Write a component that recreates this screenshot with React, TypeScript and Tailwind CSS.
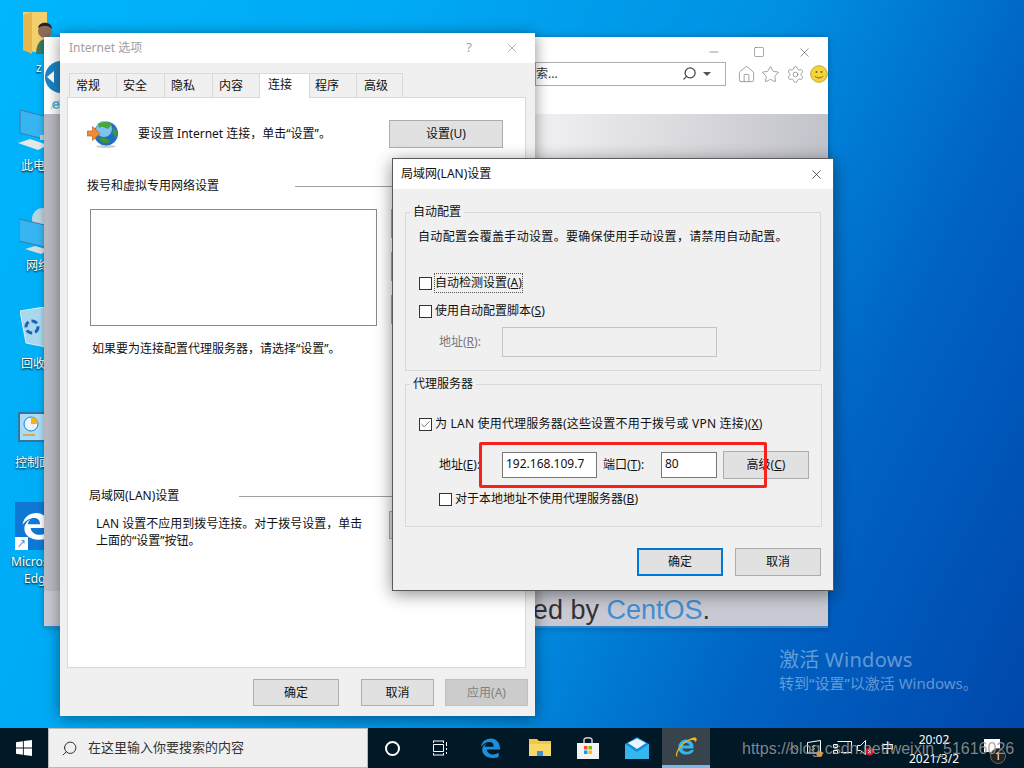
import { Home, Star, Settings, Search, X, Minus, Square, ChevronUp, Check } from "lucide-react";

const ui = "font-['Noto_Sans','Noto_Sans_CJK_SC',sans-serif]";

function Btn({ label, className = "" }: { label?: React.ReactNode; className?: string }) {
  return <div className={`flex items-center justify-center text-[12px] ${className}`}>{label}</div>;
}

const btn = "bg-[#e1e1e1] border border-[#adadad] text-[#111]";

function Box({ checked, dotted, children }: { checked?: boolean; dotted?: boolean; children: React.ReactNode }) {
  return (
    <div className="flex items-center gap-[3px] h-[16px]">
      <div className="w-[13px] h-[13px] border border-[#333] bg-white flex items-center justify-center">
        {checked && <Check size={11} strokeWidth={1.5} className="text-[#333]" />}
      </div>
      <span className={dotted ? "outline-1 outline-dotted outline-[#555]" : ""}>{children}</span>
    </div>
  );
}

function WinLogo({ size = 16, color = "#fff" }: { size?: number; color?: string }) {
  return (
    <svg width={size} height={size} viewBox="0 0 16 16" fill={color}>
      <path d="M0 2.2 6.9 1.2V7.6H0zM7.8 1.1 16 0V7.6H7.8zM0 8.4H6.9V14.8L0 13.8zM7.8 8.4H16V16L7.8 14.9z" />
    </svg>
  );
}

function EdgeE({ size = 24, color = "#1a8fdc" }: { size?: number; color?: string }) {
  return (
    <svg width={size} height={size} viewBox="0 0 24 24" fill="none">
      <path
        d="M2 11C3 4.5 8 1.5 13 1.5 19 1.5 23 6 23 13.5H8.5C9 17 12 19 15.5 19 18 19 20 18.2 21.5 17.3V21.5C19.5 22.6 17 23 14.5 23 8 23 3.5 19 3.5 14 3.5 11 5.5 8 8.5 6.5 7 8 6.5 9.2 6.2 10.5H16C16 7.5 14.5 5.5 11.5 5.5 8 5.5 4.5 7.5 2 11Z"
        fill={color}
      />
    </svg>
  );
}

function IeLogo({ size = 24 }: { size?: number }) {
  return (
    <svg width={size} height={size} viewBox="0 0 24 24" fill="none">
      <path d="M4.500 12.500A7.500 7.500 0 0 1 19.500 11.500V13.500H8.500C9 17 14 18 17 15H20C17.500 21.500 4.500 21.500 4.500 12.500ZM8.700 10.500H15.500C15 7 9.500 7 8.700 10.500Z" fill="#35b6f0" fillRule="evenodd" />
      <path d="M2.500 21.500C0 18 8 5 20 2.500 23 2 23.500 4.500 21.500 7.500 22 3.500 14 4 8 11 4.500 15 2.500 19 3.500 21.500Z" fill="#edb91b" />
    </svg>
  );
}

function Globe() {
  return (
    <svg width="32" height="28" viewBox="0 0 32 28">
      <ellipse cx="19" cy="26.500" rx="10" ry="1.500" fill="#ccc" />
      <circle cx="19" cy="13.500" r="12" fill="#1f6fc0" />
      <circle cx="17" cy="9" r="8" fill="#7cc4ef" />
      <path d="M11 4C14 1.500 21 1 25 4L21 9 15 6.500 12 8Z" fill="#46a83a" />
      <path d="M12 18C16 16.500 21 18.500 23 21.500 19 24.500 14 23 12 18ZM26 7 30.500 12 29 18 25.500 13Z" fill="#3c9a30" />
      <path d="M0 11H5.500V6.500L13 13.500 5.500 20.500V16H0Z" fill="#f08a38" stroke="#c9631a" strokeWidth=".7" />
    </svg>
  );
}

function PcIcon() {
  return (
    <svg width="30" height="46" viewBox="0 0 30 46">
      <path d="M2 0 30 7V30L2 23Z" fill="#36b5f2" stroke="#3d7da6" />
      <path d="M0 33 12 29 30 35 20 40Z" fill="#e3e8eb" />
      <path d="M22 25H30V30H22Z" fill="#c7ced2" />
    </svg>
  );
}

function Label({ children }: { children: React.ReactNode }) {
  return <div className="text-[12px] leading-[16px] text-white [text-shadow:0_1px_2px_#000]">{children}</div>;
}

function DesktopIcons() {
  return (
    <>
      <div className="absolute left-[23px] top-[12px] w-[32px] h-[40px]">
        <svg width="34" height="42" viewBox="0 0 34 42">
          <path d="M0 0H24V42L0 38Z" fill="#f3cf6d" />
          <path d="M0 3 9 0V42L0 38Z" fill="#e5b74c" />
          <circle cx="22" cy="19" r="7" fill="#8a6d58" />
          <path d="M15 16C16 9 29 9 29 17 25 13 20 13 15 16Z" fill="#222" />
          <path d="M13 42C13 32 18 27 22 27V42Z" fill="#3d7a5c" />
        </svg>
      </div>
      <div className="absolute left-[36px] top-[60px]"><Label>z</Label></div>

      <div className="absolute left-[18px] top-[110px]"><PcIcon /></div>
      <div className="absolute left-[21px] top-[158px]"><Label>此电脑</Label></div>

      <div className="absolute left-[19px] top-[208px]">
        <svg width="30" height="46" viewBox="0 0 30 46">
          <circle cx="24" cy="11" r="11" fill="#b7d3e0" />
          <path d="M0 11 30 18V40L0 33Z" fill="#36b5f2" stroke="#3d7da6" />
          <path d="M6 41 16 38 30 42 22 46Z" fill="#d6dde0" />
        </svg>
      </div>
      <div className="absolute left-[26px] top-[258px]"><Label>网络</Label></div>

      <div className="absolute left-[20px] top-[307px]">
        <svg width="30" height="42" viewBox="0 0 30 42">
          <path d="M0 4 24 0 30 8 26 40 6 36Z" fill="#a9d8ee" stroke="#d7eef8" />
          <circle cx="12" cy="20" r="6" fill="none" stroke="#1d63b8" strokeWidth="3" strokeDasharray="6 3" />
        </svg>
      </div>
      <div className="absolute left-[21px] top-[356px]"><Label>回收站</Label></div>

      <div className="absolute left-[18px] top-[412px] w-[30px] h-[30px] bg-[#a9dcf5] border-2 border-[#33779e] flex items-start p-[2px]">
        <svg width="20" height="20" viewBox="0 0 20 20">
          <circle cx="9" cy="8" r="7" fill="#eaf6fc" stroke="#1d7fc4" />
          <path d="M9 1A7 7 0 0 1 16 8H9Z" fill="#f3b21b" />
          <path d="M1 19H13" stroke="#e8991c" strokeWidth="1.5" />
        </svg>
      </div>
      <div className="absolute left-[15px] top-[455px]"><Label>控制面板</Label></div>

      <div className="absolute left-[15px] top-[502px] w-[40px] h-[48px] bg-[#0f78d4] flex items-center justify-center">
        <EdgeE size={30} color="#fff" />
        <div className="absolute left-[0px] bottom-[0px] w-[13px] h-[13px] bg-white flex items-center justify-center text-[9px] leading-none text-[#1f5fa8]">↗</div>
      </div>
      <div className="absolute left-[11px] top-[554px] w-[48px] text-center">
        <Label>Microsoft</Label>
      </div>
      <div className="absolute left-[24px] top-[571px]"><Label>Edge</Label></div>
    </>
  );
}

function BrowserWindow() {
  return (
    <div className="absolute left-[44px] top-[37px] w-[784px] h-[591px] flex flex-col bg-white shadow-[0_0_6px_rgba(0,0,0,.3)]">
      <div className="h-[77px] flex flex-col">
        <div className="h-[26px] pl-[663px] flex items-center text-[#555] mt-[2px]">
          <Minus size={14} strokeWidth={1} />
          <Square size={12} strokeWidth={1} className="ml-[32px]" />
          <X size={15} strokeWidth={1} className="ml-[32px]" />
        </div>
        <div className="flex items-center h-[24px] mt-[-3px]">
          <div className="w-[32px] h-[32px] ml-[1px] mt-[6px] shrink-0 rounded-full bg-[#1b84c4] flex items-center pl-[2px]">
            <div className="w-0 h-0 border-y-[6px] border-y-transparent border-r-[7px] border-r-white" />
          </div>
          <div className="ml-[458px] w-[198px] h-[24px] border border-[#adadad] flex items-center text-[12px] text-[#333] mt-[-1px]">
            索...
            <Search size={15} strokeWidth={2} className="ml-[124px] text-[#444] -scale-x-100" />
            <div className="ml-[6px] w-0 h-0 border-x-[4px] border-x-transparent border-t-[4px] border-t-[#555]" />
          </div>
          <div className="ml-[11px] flex items-center gap-[5.5px] text-[#888]">
            <Home size={19} strokeWidth={1} />
            <Star size={19} strokeWidth={1} />
            <Settings size={19} strokeWidth={1} />
            <svg width="18" height="18" viewBox="0 0 18 18">
              <circle cx="9" cy="9" r="8.300" fill="#f5d33c" stroke="#caa62a" />
              <circle cx="6.500" cy="7" r="1" fill="#7a6310" />
              <circle cx="11.500" cy="7" r="1" fill="#7a6310" />
              <path d="M5 11C6.500 13.500 11.500 13.500 13 11" fill="none" stroke="#7a6310" />
            </svg>
          </div>
        </div>
        <div className="flex-1 flex items-end pl-[6px] pb-[3px]">
          <IeLogo size={12} />
        </div>
      </div>
      <div className="flex-1 bg-[linear-gradient(90deg,#b9b9c1_0%,#bcbcc4_2%,#f2f2f4_62%,#c2c2ca_100%)] flex flex-col justify-end">
        <div className="h-[37px] bg-[#c9c9d3] border-b-2 border-[#2e86c8] flex items-center justify-end pr-[118px] pt-[3px] text-[27px] leading-none font-['Liberation_Sans',sans-serif] text-[#333] whitespace-nowrap">
          <span>
            Powered by <span className="text-[#3f8fd2]">CentOS</span>.
          </span>
        </div>
      </div>
    </div>
  );
}

function InternetOptions() {
  const tabs: [string, string][] = [["常规", "w-[47px]"], ["安全", "w-[48px]"], ["隐私", "w-[48px]"], ["内容", "w-[47px]"]];
  return (
    <div className="absolute left-[60px] top-[33px] w-[475px] h-[683px] bg-[#f0f0f0] shadow-[0_2px_14px_rgba(0,0,0,.45)] flex flex-col text-[12px] text-[#111]">
      <div className="h-[30px] bg-white flex items-center pl-[9px] pr-[16px] text-[#a0a0a0]">
        <span>Internet 选项</span>
        <span className="ml-auto mr-[33px] text-[13px]">?</span>
        <X size={14} strokeWidth={1} className="text-[#777]" />
      </div>

      <div className="flex items-end h-[34px] pl-[9px]">
        {tabs.map(([t, w]) => (
          <div key={t} className={`${w} h-[24px] flex items-center pl-[6px] border-l border-t border-[#d9d9d9]`}>{t}</div>
        ))}
        <div className="w-[51px] h-[25px] bg-white flex items-center pl-[8px] pb-[3px] border border-b-0 border-[#d9d9d9] z-10 mb-[-1px]">连接</div>
        <div className="w-[46px] h-[24px] flex items-center pl-[5px] border-t border-[#d9d9d9]">程序</div>
        <div className="w-[47px] h-[24px] flex items-center pl-[7px] border-l border-t border-r border-[#d9d9d9]">高级</div>
      </div>

      <div className="ml-[7px] w-[459px] h-[571px] bg-white border border-[#d9d9d9] pt-[22px]">
        <div className="flex items-center h-[28px] pl-[19px]">
          <Globe />
          <span className="ml-[19px]">要设置 Internet 连接，单击“设置”。</span>
          <Btn label="设置(U)" className={`${btn} ml-auto mr-[22px] w-[114px] h-[28px]`} />
        </div>

        <div className="flex items-center mt-[30px] h-[16px] pl-[19px]">
          <span>拨号和虚拟专用网络设置</span>
          <div className="ml-[76px] h-px flex-1 bg-[#a0a0a0]" />
        </div>

        <div className="flex mt-[15px] pl-[22px]">
          <div className="w-[287px] h-[117px] border border-[#888] bg-white" />
          <div className="ml-[14px] w-[112px] flex flex-col gap-[14px]">
            <Btn className={`${btn} h-[29px]`} />
            <Btn className={`${btn} h-[29px]`} />
            <Btn className={`${btn} h-[29px]`} />
          </div>
        </div>

        <div className="mt-[15px] pl-[24px] leading-[16px]">如果要为连接配置代理服务器，请选择“设置”。</div>

        <div className="flex items-center mt-[131px] h-[16px] pl-[21px]">
          <span>局域网(LAN)设置</span>
          <div className="ml-[60px] h-px flex-1 bg-[#a0a0a0]" />
        </div>

        <div className="flex mt-[7px] pl-[28px]">
          <div className="w-[270px] leading-[17px] mt-[4px]">
            LAN 设置不应用到拨号连接。对于拨号设置，单击上面的“设置”按钮。
          </div>
          <Btn className={`${btn} ml-[23px] w-[114px] h-[28px]`} />
        </div>
      </div>

      <div className="flex pl-[193px] mt-[11px]">
        <Btn label="确定" className={`${btn} w-[86px] h-[27px]`} />
        <Btn label="取消" className={`${btn} ml-[22px] w-[73px] h-[27px]`} />
        <Btn label="应用(A)" className="ml-[11px] w-[83px] h-[27px] bg-[#cccccc] border border-[#bfbfbf] text-[#808080]" />
      </div>
    </div>
  );
}

function LanDialog() {
  return (
    <div className="absolute left-[392px] top-[158px] w-[442px] h-[433px] bg-[#f0f0f0] border border-[#5a5a5a] shadow-[0_3px_16px_rgba(0,0,0,.45)] flex flex-col text-[12px] text-[#111]">
      <div className="h-[30px] bg-white flex items-center pl-[8px] pr-[9px] shrink-0">
        <span>局域网(LAN)设置</span>
        <X size={15} strokeWidth={1} className="ml-auto text-black" />
      </div>

      <div className="px-[12px] pt-[15px]">
        <fieldset className="border border-[#d9d9d9] h-[167px] px-[12px]">
          <legend className="ml-[-8px] px-[3px] leading-[16px]">自动配置</legend>
          <div className="leading-[16px] mt-[9px] tracking-[.33px]">自动配置会覆盖手动设置。要确保使用手动设置，请禁用自动配置。</div>
          <div className="mt-[30px] pl-[1px]">
            <Box dotted>自动检测设置(<u>A</u>)</Box>
          </div>
          <div className="mt-[12px] pl-[1px]">
            <Box>使用自动配置脚本(<u>S</u>)</Box>
          </div>
          <div className="flex items-center mt-[8px] pl-[21px]">
            <span className="w-[63px] text-[#777] whitespace-nowrap">地址(<u>R</u>):</span>
            <div className="w-[215px] h-[30px] bg-[#f0f0f0] border border-[#c4c4c4]" />
          </div>
        </fieldset>

        <fieldset className="border border-[#d9d9d9] h-[151px] mt-[5px] px-[12px]">
          <legend className="ml-[-8px] px-[3px] leading-[16px]">代理服务器</legend>
          <div className="mt-[24px] pl-[1px] tracking-[.2px]">
            <Box checked>为 LAN 使用代理服务器(这些设置不用于拨号或 VPN 连接)(<u>X</u>)</Box>
          </div>
          <div className="flex items-center mt-[19px] pl-[21px] h-[28px]">
            <span className="w-[63px] whitespace-nowrap">地址(<u>E</u>):</span>
            <div className="w-[95px] h-[26px] bg-white border border-[#777] pl-[3px] leading-[22px]">192.168.109.7</div>
            <span className="ml-[6px] w-[58px] whitespace-nowrap">端口(<u>T</u>):</span>
            <div className="w-[56px] h-[26px] bg-white border border-[#777] pl-[3px] leading-[22px]">80</div>
            <Btn label={<>高级(<u>C</u>)</>} className={`${btn} ml-[6px] w-[86px] h-[28px]`} />
          </div>
          <div className="mt-[12px] pl-[21px]">
            <Box>对于本地地址不使用代理服务器(<u>B</u>)</Box>
          </div>
        </fieldset>

        <div className="flex justify-end gap-[12px] mt-[21px]">
          <Btn label="确定" className="w-[86px] h-[28px] bg-[#e1e1e1] border-2 border-[#0078d7] text-[#111]" />
          <Btn label="取消" className={`${btn} w-[86px] h-[28px]`} />
        </div>
      </div>
    </div>
  );
}

function Taskbar() {
  return (
    <div className="relative h-[40px] bg-[#011826] flex items-center shrink-0 text-white">
      <div className="w-[48px] shrink-0 flex justify-center"><WinLogo /></div>
      <div className="w-[320px] shrink-0 h-full bg-[#f0f0f0] border border-[#b9b9b9] flex items-center text-[13px] text-[#333]">
        <Search size={17} strokeWidth={1.3} className="ml-[12px] -scale-x-100 text-[#222]" />
        <span className="ml-[10px]">在这里输入你要搜索的内容</span>
      </div>
      <div className="w-[48px] shrink-0 flex justify-center">
        <div className="w-[15px] h-[15px] rounded-full border-2 border-white" />
      </div>
      <div className="w-[48px] shrink-0 flex justify-center">
        <svg width="16" height="16" viewBox="0 0 16 16" fill="none" stroke="#fff">
          <path d="M1.500 1V3M11.500 1V3M1.500 4.500H11.500V11.500H1.500ZM1.500 13V15M11.500 13V15M1 15H12M1 1H12M14.500 2V6M14.500 8V10M14.500 12V14" />
        </svg>
      </div>
      <div className="w-[52px] shrink-0 flex justify-center"><EdgeE size={22} /></div>
      <div className="w-[48px] shrink-0 flex justify-center">
        <svg width="22" height="20" viewBox="0 0 22 20">
          <path d="M0 1H8L10 3H22V18H0Z" fill="#f2c744" />
          <path d="M0 6H22V18H0Z" fill="#f8d868" />
          <path d="M8 13H14V18H8Z" fill="#3d8fd1" />
        </svg>
      </div>
      <div className="w-[48px] shrink-0 flex justify-center">
        <svg width="24" height="24" viewBox="0 0 24 24">
          <path d="M8 7V4C8 1 16 1 16 4V7" fill="none" stroke="#ccc" strokeWidth="1.5" />
          <path d="M1 7H23V23H1Z" fill="#f2f2f2" />
          <path d="M8 10H11.500V13.500H8Z" fill="#f25022" />
          <path d="M12.500 10H16V13.500H12.500Z" fill="#7fba00" />
          <path d="M8 14.500H11.500V18H8Z" fill="#00a4ef" />
          <path d="M12.500 14.500H16V18H12.500Z" fill="#ffb900" />
        </svg>
      </div>
      <div className="w-[50px] shrink-0 flex justify-center">
        <svg width="24" height="22" viewBox="0 0 24 22">
          <path d="M0 7 12 0 24 7V22H0Z" fill="#0f8fd8" />
          <path d="M0 7 12 15 24 7V22H0Z" fill="#35b6ee" />
          <path d="M3 6 12 1.500 21 6 12 12Z" fill="#e9f6fd" />
        </svg>
      </div>
      <div className="w-[48px] shrink-0 h-full bg-[#38434b] border-b-[3px] border-[#76b9ed] flex justify-center items-center">
        <IeLogo size={24} />
      </div>

      <div className="ml-[76px] flex items-center">
        <ChevronUp size={14} strokeWidth={1} />
        <svg width="17" height="17" viewBox="0 0 17 17" fill="none" stroke="#fff" className="ml-[6px]">
          <path d="M1.500 2.500 14.500 .5V13H1.500ZM9 6C7 5 5.500 6.500 7 7.500 9 8.500 8 11 5.500 10" />
          <circle cx="13.500" cy="14" r="3" fill="#f59a23" stroke="none" />
        </svg>
        <svg width="20" height="15" viewBox="0 0 20 15" fill="none" stroke="#fff" className="ml-[9px]">
          <path d="M5.500 .5H19.500V11.500H9M1.500 3.500H5.500V6.500H1.500ZM1.500 9.500H5.500V12.500H1.500Z" />
        </svg>
        <svg width="17" height="16" viewBox="0 0 17 16" fill="none" stroke="#fff" className="ml-[5px]">
          <path d="M.5 5.500H3.500L8.500 .5V14.500L3.500 10.500H.5Z" />
          <circle cx="12.500" cy="11.500" r="4" fill="#e81123" stroke="none" />
          <path d="M11 10 14 13M14 10 11 13" strokeWidth=".8" />
        </svg>
        <span className="text-[13px] ml-[7px]">中</span>
      </div>

      <div className="ml-auto w-[80px] mr-[50px] text-center text-[12px] leading-[19px] pt-[1px]">
        <div>20:02</div>
        <div>2021/3/2</div>
      </div>
      <div className="absolute right-[24px] top-[11px] w-[16px] h-[13px] bg-white" />
      <div className="absolute right-[18px] top-[20px] w-[16px] h-[16px] rounded-full bg-[#222] border border-[#666] text-[11px] leading-[14px] text-center">1</div>

      {/* watermark over the tray */}
      <div className="absolute left-[742px] top-[11px] text-[16px] leading-[20px] font-['Liberation_Sans',sans-serif] text-[#9a9a9a]/85 whitespace-nowrap">
        https://blog.csdn.net/weixin_51616026
      </div>
    </div>
  );
}

export default function App() {
  return (
    <div className={`w-[1024px] h-[768px] overflow-hidden flex flex-col ${ui}`}>
      <div className="relative flex-1 bg-[linear-gradient(115deg,#00b6fc_0%,#00a9f4_30%,#0090e2_58%,#0063c4_78%,#0047ab_100%)]">
        <DesktopIcons />
        <BrowserWindow />
        <InternetOptions />
        <LanDialog />

        {/* red annotation box */}
        <div className="absolute left-[479px] top-[442px] w-[288px] h-[46px] border-[3px] border-[#f5231b] rounded-[2px]" />

        <div className="absolute left-[779px] top-[648px] text-white/40">
          <div className="text-[20px] leading-[24px] tracking-[.3px]">激活 Windows</div>
          <div className="text-[15px] leading-[18px] mt-[2px]">转到“设置”以激活 Windows。</div>
        </div>
      </div>
      <Taskbar />
    </div>
  );
}
